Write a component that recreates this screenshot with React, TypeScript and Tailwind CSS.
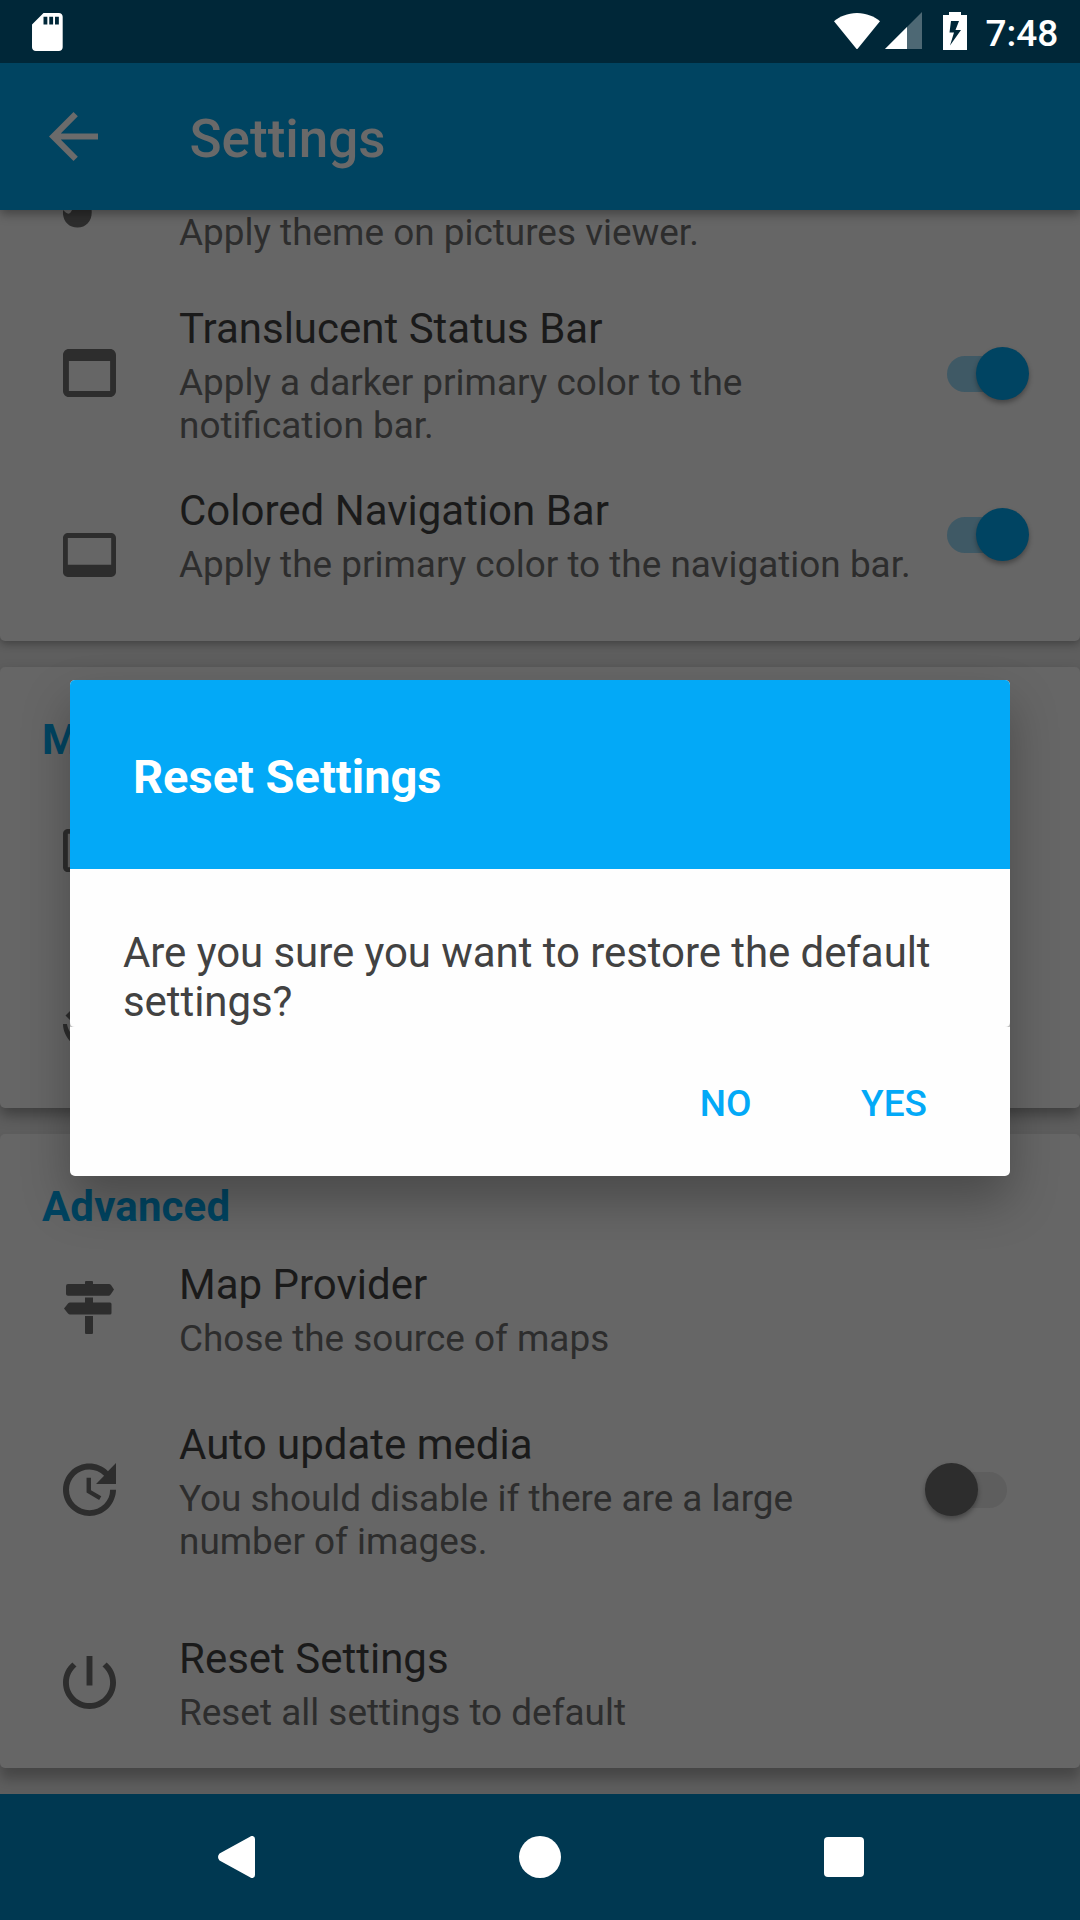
import type { ReactNode } from 'react';

function Glyph({ box, className, children }: { box: string; className: string; children: ReactNode }) {
  return (
    <svg viewBox={box} className={`block shrink-0 ${className}`} fill="currentColor" preserveAspectRatio="none">
      {children}
    </svg>
  );
}

function Switch({ on }: { on?: boolean }) {
  return (
    <div className={`relative h-[53px] w-[83px] shrink-0 ${on ? 'mr-[51px]' : 'mr-[72px]'}`}>
      <div className={`absolute top-[9px] h-9 rounded-full ${on ? 'left-px w-[70px] bg-[#3f5965]' : 'left-3 w-[70px] bg-[#5e5e5e]'}`} />
      <div
        className={`absolute top-0 size-[53px] rounded-full shadow-[0_3px_5px_rgba(0,0,0,0.32)] ${
          on ? 'right-0 bg-[#004462]' : 'left-0 bg-[#2d2d2d]'
        }`}
      />
    </div>
  );
}

type RowProps = {
  icon: ReactNode;
  iconPad: string;
  title?: string;
  lines: string[];
  gap: string;
  control?: ReactNode;
};

function Row({ icon, iconPad, title, lines, gap, control }: RowProps) {
  return (
    <div className={`flex items-start text-[#2d2d2d] ${gap}`}>
      <div className={`ml-[62.5px] w-[116.5px] shrink-0 ${iconPad}`}>{icon}</div>
      <div className="grow whitespace-nowrap">
        {title && <div className="mb-2 text-[42px] leading-[49px] text-[#1a1a1a]">{title}</div>}
        {lines.map((l) => (
          <div key={l} className="text-[36.92px] leading-[43px]">{l}</div>
        ))}
      </div>
      {control}
    </div>
  );
}

export default function App() {
  return (
    <div className="relative flex h-[1920px] w-[1080px] flex-col overflow-hidden bg-[#5e5e5e] font-['Roboto',sans-serif]">
      <header className="z-10 shrink-0 shadow-[0_4px_10px_rgba(0,0,0,0.35)]">
        <div className="flex h-[63px] items-start bg-[#002738] text-white">
          <Glyph box="4 2 16 20" className="mt-[12.7px] ml-[32.3px] h-[38px] w-[30.7px]">
            <path d="M18 2h-8L4.02 8 4 20c0 1.1.9 2 2 2h12c1.1 0 2-.9 2-2V4c0-1.1-.9-2-2-2zm-6 6h-2V4h2v4zm3 0h-2V4h2v4zm3 0h-2V4h2v4z" />
          </Glyph>
          <Glyph box="0 0 46 36.5" className="mt-[12.5px] ml-[771px] h-[36.5px] w-[46px]">
            <path d="M23 36.5L0 8.3C5.5 3.6 13.5 0 23 0s17.500 3.600 23 8.300z" />
          </Glyph>
          <Glyph box="0 0 37 37" className="mt-3 ml-[5px] h-[37px] w-[37px]">
            <path d="M37 0V37H0z" opacity=".3" />
            <path d="M22 15V37H0z" />
          </Glyph>
          <Glyph box="0 0 24 38" className="mt-3 ml-[21px] h-[38px] w-6">
            <path fillRule="evenodd" d="M6 0H18V3H24V38H0V3H6zM8 9L6.500 20.500H11L7 33.500L18 18H12.500L16 9z" />
          </Glyph>
          <span className="mt-3 ml-[18.500px] text-[37px] leading-[43px] font-medium">7:48</span>
        </div>
        <div className="flex h-[147px] items-start bg-[#004461] text-[#6b6b6b]">
          <Glyph box="4 4 16 16" className="mt-[48.500px] ml-[48.500px] size-[49px]">
            <path d="M20 11H7.830l5.590-5.590L12 4l-8 8 8 8 1.410-1.410L7.830 13H20v-2z" />
          </Glyph>
          <h1 className="mt-[45px] ml-[92px] text-[53px] leading-[62px] font-medium text-[#696969]">Settings</h1>
        </div>
      </header>

      <main className="flex min-h-0 grow flex-col gap-[26px] pb-[26px]">
        <section className="h-[431px] shrink-0 rounded-b-[5px] bg-[#666] pt-px shadow-[0_3px_9px_rgba(0,0,0,0.3)]">
          <Row
            gap=""
            iconPad=""
            lines={['Apply theme on pictures viewer.']}
            icon={
              <Glyph box="0 0 29 18" className="-mt-px h-[18px] w-[29px]">
                <path d="M0 0C3 3 6 6 8.500 1L9.500-1H28.500C30 10 24 17.500 14.500 17.500S-1 10 0 0z" />
              </Glyph>
            }
          />
          <Row
            gap="mt-[50px]"
            iconPad="pt-[45px]"
            title="Translucent Status Bar"
            lines={['Apply a darker primary color to the', 'notification bar.']}
            icon={
              <Glyph box="3 4 18 16" className="h-[48px] w-[53px]">
                <path d="M19 4H5c-1.110 0-2 .9-2 2v12c0 1.100.890 2 2 2h14c1.100 0 2-.9 2-2V6c0-1.100-.890-2-2-2zm0 14H5V8h14v10z" />
              </Glyph>
            }
            control={<div className="pt-[43px]"><Switch on /></div>}
          />
          <Row
            gap="mt-[39px]"
            iconPad="pt-[47px]"
            title="Colored Navigation Bar"
            lines={['Apply the primary color to the navigation bar.']}
            icon={
              <Glyph box="1 3 22 18" className="h-[44px] w-[53px]">
                <path d="M21 3H3c-1.100 0-2 .9-2 2v14c0 1.100.9 2 2 2h18c1.100 0 2-.9 2-2V5c0-1.100-.9-2-2-2zm0 13H3V5h18v11z" />
              </Glyph>
            }
            control={<div className="pt-[22px]"><Switch on /></div>}
          />
        </section>

        <section className="h-[441px] shrink-0 rounded-[5px] bg-[#666] pt-12 shadow-[0_7px_14px_rgba(0,0,0,0.34)]">
          <h2 className="ml-[42px] text-[42px] leading-[49px] font-bold text-[#004461]">Media</h2>
          <div className="mt-[65px] ml-[62.500px] text-[#2d2d2d]">
            <Glyph box="1 3 22 18" className="h-[43px] w-[53px]">
              <path d="M21 3H3c-1.100 0-2 .9-2 2v14c0 1.100.9 2 2 2h18c1.100 0 2-.9 2-2V5c0-1.100-.9-2-2-2zm0 16H3V5h18v14z" />
            </Glyph>
            <Glyph box="0 0 53 53" className="mt-[137px] size-[53px]">
              <path d="M9 0L2.500 6.500L9 13L12 11L7.500 6.500L12 1zM0 15H4C5 23 15 36 26 36V41C12 41 0 28 0 15z" />
            </Glyph>
          </div>
        </section>

        <section className="h-[634px] shrink-0 rounded-[5px] bg-[#666] pt-12 shadow-[0_11px_13px_rgba(0,0,0,0.26)]">
          <h2 className="ml-[42px] text-[42px] leading-[49px] font-bold tracking-[0.15px] text-[#004461]">Advanced</h2>
          <Row
            gap="mt-[29px]"
            iconPad="pt-[21px]"
            title="Map Provider"
            lines={['Chose the source of maps']}
            icon={
              <Glyph box="0 0 53 53" className="size-[53px]">
                <path d="M22 3V1q0-1 1-1h6q1 0 1 1V3H46Q47 3 48 4L51 8.500L48 13Q47 14.700 46 14.700H5Q3 14.700 3 13V5Q3 3 5 3zM22 16.500H30V21.500H47Q48.500 21.500 48.500 23V32Q48.500 33.500 47 33.500H7Q6 33.500 5 32.500L1 27.500L5 22.500Q6 21.500 7 21.500H22zM22 35H30V51.500Q30 53 29 53H23Q22 53 22 51.500z" />
              </Glyph>
            }
          />
          <Row
            gap="mt-[60px]"
            iconPad="pt-[43px]"
            title="Auto update media"
            lines={['You should disable if there are a large', 'number of images.']}
            icon={
              <Glyph box="3 3 18 18" className="size-[53px]">
                <path d="M21 10.120h-6.780l2.740-2.820c-2.730-2.700-7.150-2.800-9.880-.1-2.730 2.710-2.730 7.080 0 9.790s7.150 2.710 9.880 0C18.320 15.650 19 14.080 19 12.100h2c0 1.980-.880 4.550-2.640 6.290-3.510 3.480-9.210 3.480-12.720 0-3.500-3.470-3.530-9.110-.020-12.580s9.140-3.470 12.650 0L21 3v7.120zM12.500 8v4.250l3.500 2.080-.720 1.210L11 13V8h1.500z" />
              </Glyph>
            }
            control={<div className="pt-[43px]"><Switch /></div>}
          />
          <Row
            gap="mt-[71px]"
            iconPad="pt-[22px]"
            title="Reset Settings"
            lines={['Reset all settings to default']}
            icon={
              <Glyph box="3 3 18 18" className="size-[53px]">
                <path d="M13 3h-2v10h2V3zm4.830 2.170l-1.420 1.420C17.990 7.860 19 9.810 19 12c0 3.870-3.130 7-7 7s-7-3.130-7-7c0-2.190 1.010-4.140 2.580-5.420L6.170 5.170C4.230 6.820 3 9.260 3 12c0 4.970 4.030 9 9 9s9-4.030 9-9c0-2.740-1.230-5.180-3.170-6.830z" />
              </Glyph>
            }
          />
        </section>
      </main>

      <nav className="z-10 flex h-[126px] shrink-0 items-start bg-[#003851] text-white">
        <Glyph box="0 0 37 42" className="mt-[42px] ml-[217.500px] h-[42px] w-[37px]">
          <path d="M32 .8Q33.300-.3 34.700 0Q37 .5 37 3V39Q37 41.500 34.700 42Q33.300 42.300 32 41.200L1.500 24.500Q-1.500 21 1.500 17.500z" />
        </Glyph>
        <div className="mt-[42px] ml-[264.500px] size-[42px] rounded-full bg-white" />
        <div className="mt-[43px] ml-[263px] size-10 rounded-[4px] bg-white" />
      </nav>

      <div role="dialog" className="absolute top-[680px] left-[70px] z-20 flex h-[496px] w-[940px] flex-col rounded-[5px] bg-[#fefefe] shadow-[0_24px_48px_rgba(0,0,0,0.28)]">
        <div className="h-[189px] rounded-t-[5px] bg-[#03a9f7] pt-[69px] pl-[63px]">
          <h2 className="text-[47px] leading-[55px] font-bold text-white">Reset Settings</h2>
        </div>
        <div className="h-[158px] pt-[59px] pl-[53px] text-[42px] leading-[49px] tracking-[-0.07px] text-[#424242]">
          Are you sure you want to restore the default
          <br />
          settings?
        </div>
        <div className="flex h-0 justify-between">
          <Glyph box="0 0 5 5" className="-mt-[5px] size-[5px] text-[#c4c4c4]">
            <path d="M0 0Q0 5 5 5H0z" />
          </Glyph>
          <Glyph box="0 0 5 5" className="-mt-[5px] size-[5px] text-[#c4c4c4]">
            <path d="M5 0Q5 5 0 5H5z" />
          </Glyph>
        </div>
        <div className="flex justify-end pt-[55px] pr-[83px] text-[37px] leading-[43px] font-medium text-[#03a9f7]">
          <button className="mr-[109.500px]">NO</button>
          <button>YES</button>
        </div>
      </div>
    </div>
  );
}
